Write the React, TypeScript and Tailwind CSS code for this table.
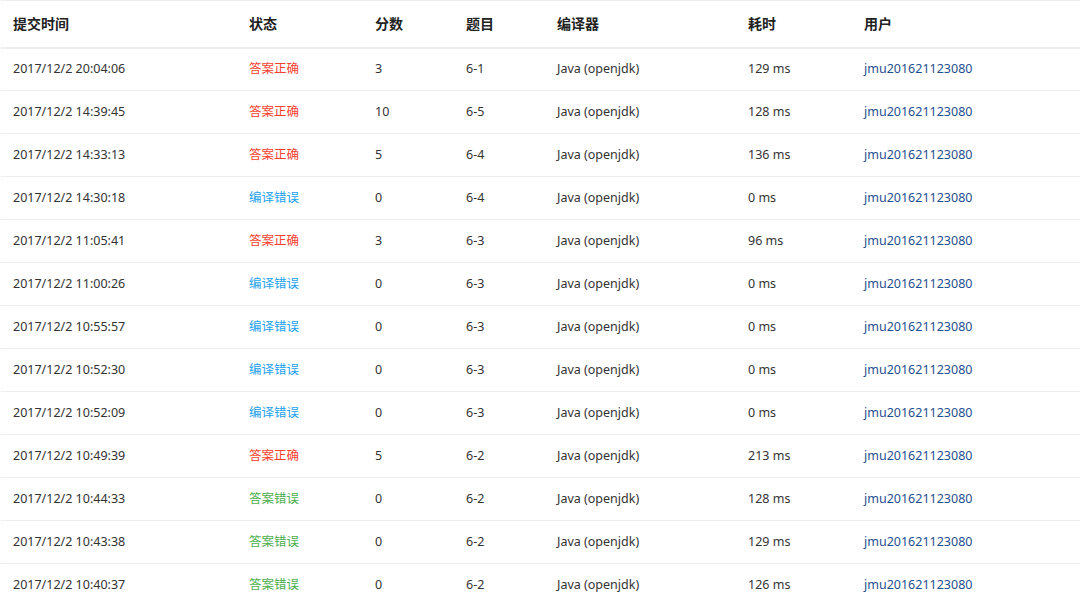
const OK = "答案正确";
const CE = "编译错误";
const WA = "答案错误";

const rows: [string, string, string, string, string][] = [
  ["2017/12/2 20:04:06", OK, "3", "6-1", "129 ms"],
  ["2017/12/2 14:39:45", OK, "10", "6-5", "128 ms"],
  ["2017/12/2 14:33:13", OK, "5", "6-4", "136 ms"],
  ["2017/12/2 14:30:18", CE, "0", "6-4", "0 ms"],
  ["2017/12/2 11:05:41", OK, "3", "6-3", "96 ms"],
  ["2017/12/2 11:00:26", CE, "0", "6-3", "0 ms"],
  ["2017/12/2 10:55:57", CE, "0", "6-3", "0 ms"],
  ["2017/12/2 10:52:30", CE, "0", "6-3", "0 ms"],
  ["2017/12/2 10:52:09", CE, "0", "6-3", "0 ms"],
  ["2017/12/2 10:49:39", OK, "5", "6-2", "213 ms"],
  ["2017/12/2 10:44:33", WA, "0", "6-2", "128 ms"],
  ["2017/12/2 10:43:38", WA, "0", "6-2", "129 ms"],
  ["2017/12/2 10:40:37", WA, "0", "6-2", "126 ms"],
];

const statusColor: Record<string, string> = {
  [OK]: "text-[#f5412f]",
  [CE]: "text-[#22a1f0]",
  [WA]: "text-[#4cae4f]",
};

const headers = ["提交时间", "状态", "分数", "题目", "编译器", "耗时", "用户"];
const widths = ["w-[236px]", "w-[126px]", "w-[91px]", "w-[91px]", "w-[191px]", "w-[116px]", ""];

export default function App() {
  return (
    <div
      className="bg-white h-[602px] overflow-hidden pl-px pr-[2px]"
      style={{ fontFamily: '"Noto Sans", "Noto Sans CJK SC", sans-serif' }}
    >
      <table className="w-full border-collapse text-[12.5px] text-[#333]">
        <thead>
          <tr className="border-t border-[#eee] border-b-2">
            {headers.map((h, i) => (
              <th
                key={h}
                className={`${widths[i]} h-[47px] pl-3 text-left font-bold text-[14px] text-[#222]`}
              >
                {h}
              </th>
            ))}
          </tr>
        </thead>
        <tbody>
          {rows.map((r, i) => (
            <tr key={i} className="border-b border-[#eee]">
              <td className="h-[43px] pl-3">{r[0]}</td>
              <td className={`pl-3 ${statusColor[r[1]]}`}>{r[1]}</td>
              <td className="pl-3">{r[2]}</td>
              <td className="pl-3">{r[3]}</td>
              <td className="pl-3">Java (openjdk)</td>
              <td className="pl-3">{r[4]}</td>
              <td className="pl-3 text-[#1f4f8f]">jmu201621123080</td>
            </tr>
          ))}
        </tbody>
      </table>
    </div>
  );
}
